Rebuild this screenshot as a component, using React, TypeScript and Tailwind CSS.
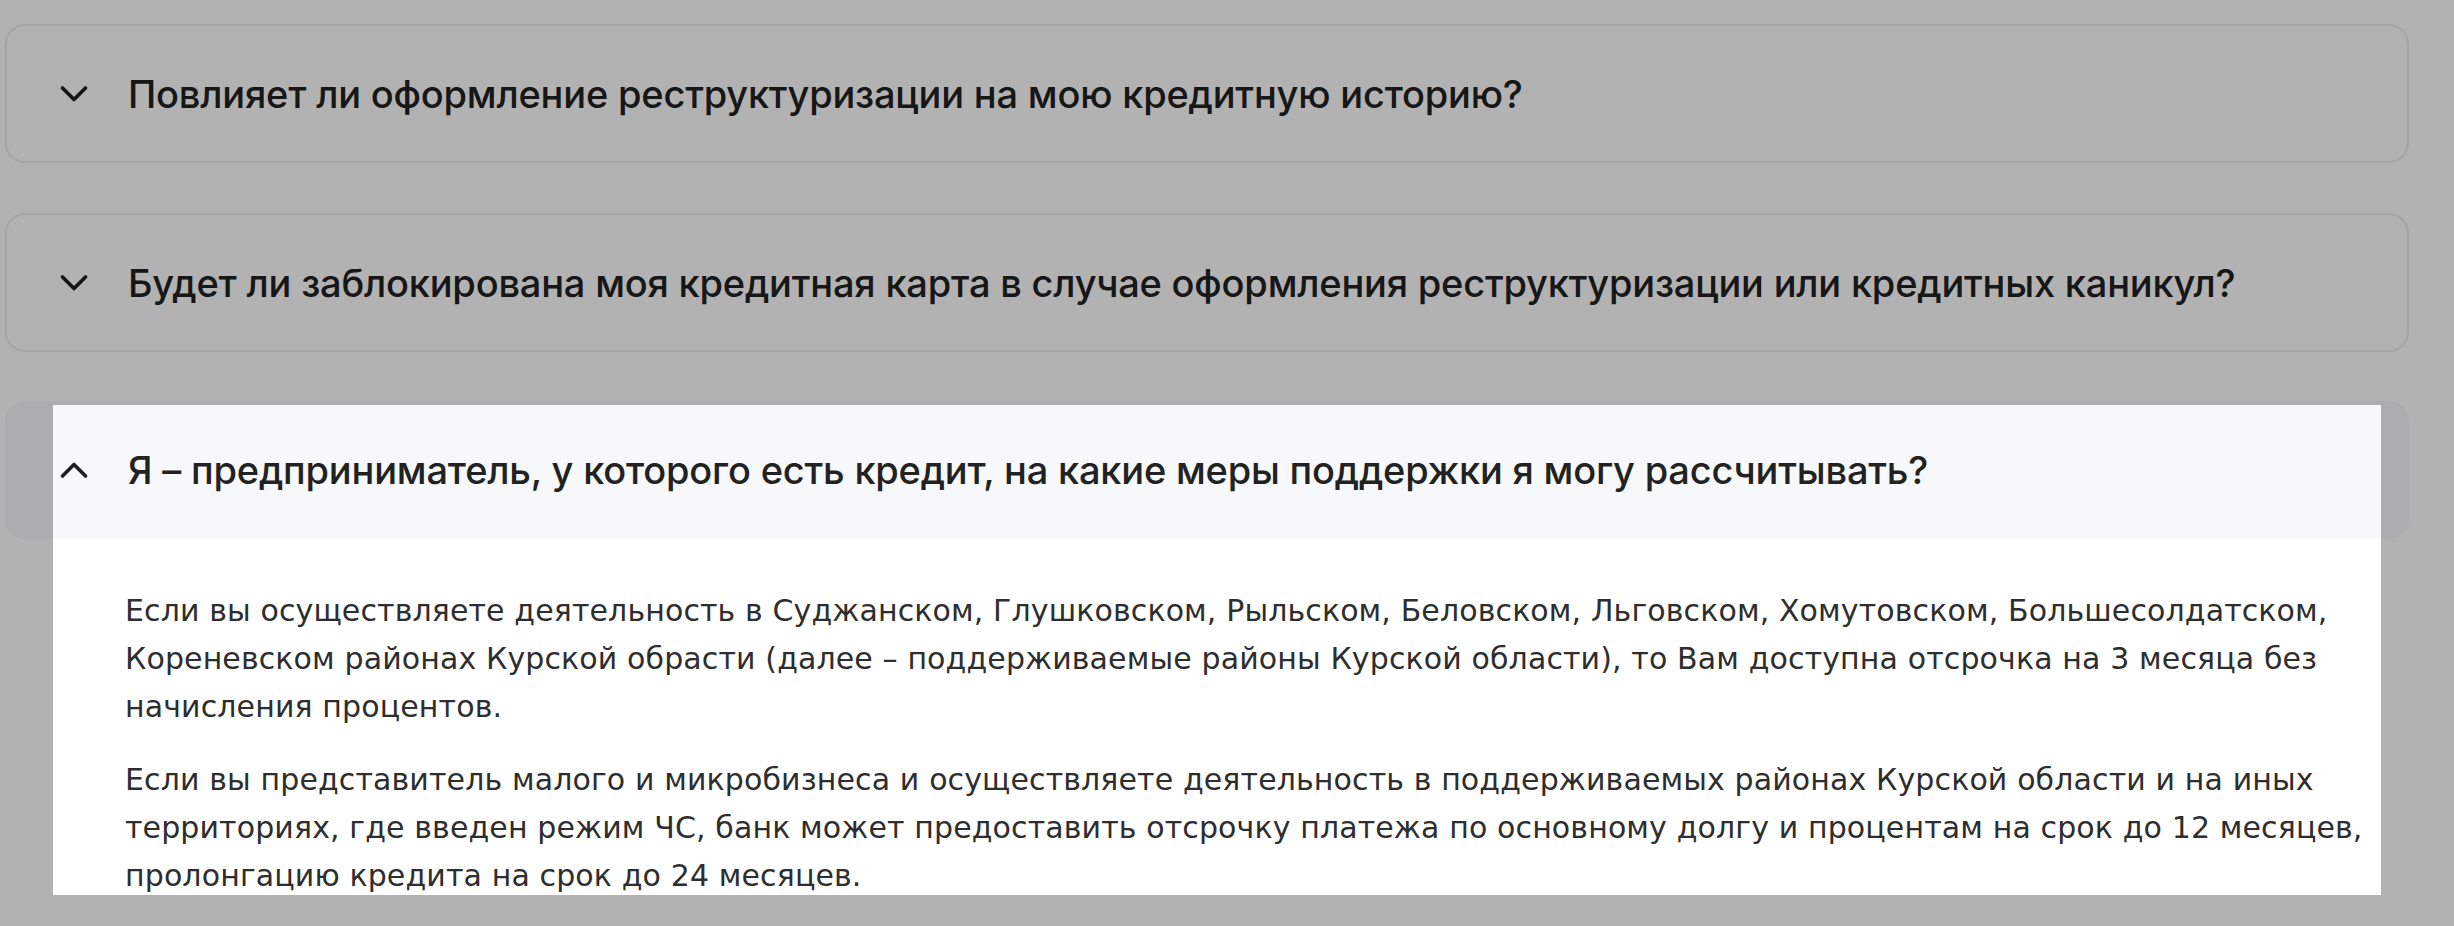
import React from 'react';

const Chevron: React.FC<{ up?: boolean }> = ({ up }) => (
  <svg width="28" height="16" viewBox="0 0 28 16" fill="none" className="shrink-0">
    <path
      d={up ? 'M2.5 14 L14 2.5 L25.5 14' : 'M2.5 2 L14 13.5 L25.5 2'}
      stroke="#1f1f1f"
      strokeWidth="3.6"
      strokeLinecap="round"
      strokeLinejoin="round"
    />
  </svg>
);

const questions = [
  'Повлияет ли оформление реструктуризации на мою кредитную историю?',
  'Будет ли заблокирована моя кредитная карта в случае оформления реструктуризации или кредитных каникул?',
];

const para1 = [
  'Если вы осуществляете деятельность в Суджанском, Глушковском, Рыльском, Беловском, Льговском, Хомутовском, Большесолдатском,',
  'Кореневском районах Курской обрасти (далее – поддерживаемые районы Курской области), то Вам доступна отсрочка на 3 месяца без',
  'начисления процентов.',
];

const para2 = [
  'Если вы представитель малого и микробизнеса и осуществляете деятельность в поддерживаемых районах Курской области и на иных',
  'территориях, где введен режим ЧС, банк может предоставить отсрочку платежа по основному долгу и процентам на срок до 12 месяцев,',
  'пролонгацию кредита на срок до 24 месяцев.',
];

export default function App() {
  return (
    <div className="relative h-[926px] w-[2454px] overflow-hidden bg-white">
      <div className="flex w-[2409px] flex-col gap-[50px] pl-[5px] pt-[24px]">
        {questions.map((q) => (
          <div
            key={q}
            className="flex h-[139px] items-center gap-[40px] rounded-[20px] border-2 border-[#ebecf2] bg-white pl-[53px]"
          >
            <Chevron />
            <span className="font-['Inter',sans-serif] text-[38px] font-medium leading-none tracking-[-0.2px] text-[#222]">
              {q}
            </span>
          </div>
        ))}

        {/* open item */}
        <div className="-mt-[1px]">
          <div className="flex h-[138px] items-center gap-[40px] rounded-[20px] bg-[#f7f8fa] pl-[55px]">
            <Chevron up />
            <span className="font-['Inter',sans-serif] text-[38px] font-medium leading-none tracking-[-0.2px] text-[#222]">
              Я – предприниматель, у которого есть кредит, на какие меры поддержки я могу рассчитывать?
            </span>
          </div>
          <div className="flex flex-col gap-[25px] pl-[120px] pt-[48px] font-['DejaVu_Sans',sans-serif] text-[30px] leading-[48px] tracking-[0.12px] text-[#2e2e2e]">
            <p>
              {para1.map((l) => (
                <span key={l} className="block whitespace-nowrap">{l}</span>
              ))}
            </p>
            <p>
              {para2.map((l) => (
                <span key={l} className="block whitespace-nowrap">{l}</span>
              ))}
            </p>
          </div>
        </div>
      </div>

      {/* tour spotlight over the open item */}
      <div className="pointer-events-none absolute left-[53px] top-[405px] h-[490px] w-[2328px] shadow-[0_0_0_3000px_rgba(0,0,0,0.3)]" />
    </div>
  );
}
